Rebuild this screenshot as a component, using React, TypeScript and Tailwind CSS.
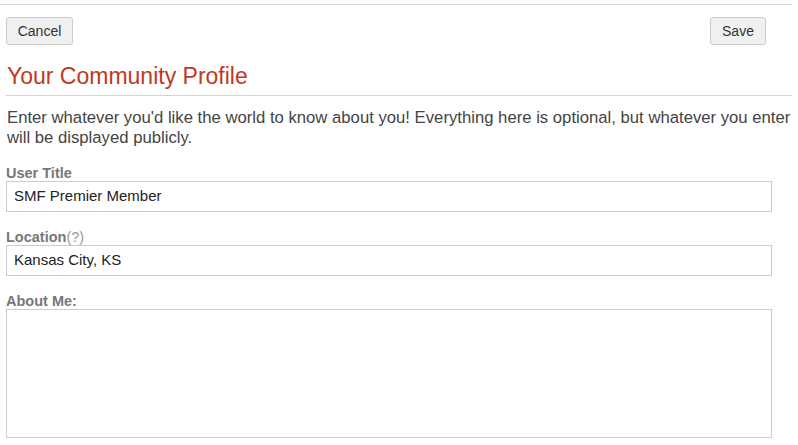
import React from "react";

const font = { fontFamily: '"Liberation Sans", Arial, sans-serif' };

function Field({ label, hint, value }: { label: string; hint?: string; value: string }) {
  return (
    <div className="mb-[17px]">
      <div className="text-[14.5px] leading-[16px] font-bold text-[#777]">
        {label}
        {hint && <span className="font-normal text-[#999]">{hint}</span>}
      </div>
      <div className="w-[766px] h-[31px] border border-[#ccc] bg-white flex items-center px-[7px] text-[15px] text-[#222]">
        {value}
      </div>
    </div>
  );
}

export default function App() {
  return (
    <div className="w-[798px] h-[445px] bg-white overflow-hidden" style={font}>
      {/* top divider */}
      <div className="w-[792px] h-[5px] border-b border-[#d4d4d4]" />

      <div className="pl-[6px] pr-[6px]">
        {/* action buttons */}
        <div className="flex justify-between w-[760px] mt-[12px]">
          <button className="h-[28px] w-[67px] rounded-[3px] border border-[#ccc] bg-[#f0f0f0] text-[14px] text-[#333]">
            Cancel
          </button>
          <button className="h-[28px] w-[56px] rounded-[3px] border border-[#ccc] bg-[#f0f0f0] text-[14px] text-[#333]">
            Save
          </button>
        </div>

        {/* heading */}
        <h2 className="mt-[18px] pl-[1px] pb-[6px] text-[23px] leading-[26px] text-[#c1391e] border-b border-[#d4d4d4] w-[786px]">
          Your Community Profile
        </h2>

        <p className="mt-[12px] pl-[1px] text-[16.7px] leading-[20px] text-[#444]">
          Enter whatever you'd like the world to know about you! Everything here is optional, but whatever you enter will be displayed publicly.
        </p>

        <div className="mt-[17px]">
          <Field label="User Title" value="SMF Premier Member" />
          <Field label="Location" hint="(?)" value="Kansas City, KS" />
          <div>
            <div className="text-[14.5px] leading-[16px] font-bold text-[#777]">About Me:</div>
            <div className="w-[766px] h-[129px] border border-[#ccc] bg-white" />
          </div>
        </div>
      </div>
    </div>
  );
}
